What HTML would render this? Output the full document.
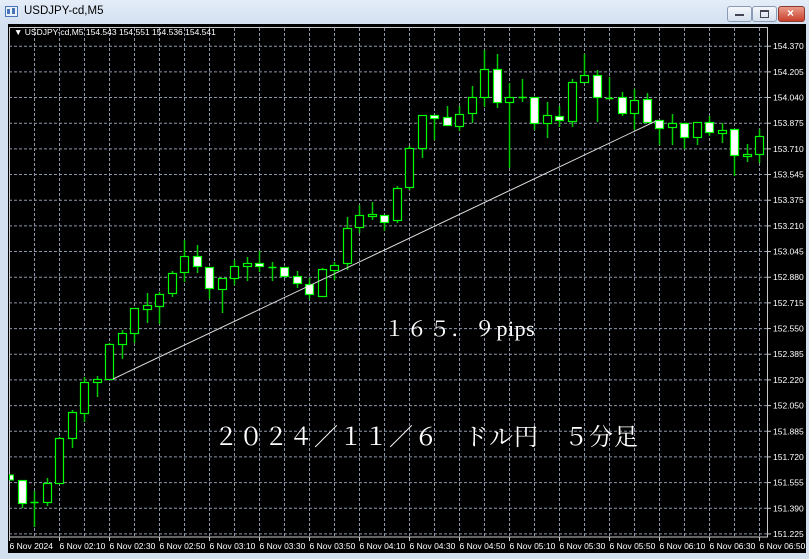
<!DOCTYPE html>
<html><head><meta charset="utf-8"><style>
html,body{margin:0;padding:0;width:809px;height:559px;overflow:hidden;background:#dce7f4;}
#w{position:absolute;left:0;top:0;width:809px;height:559px;background:linear-gradient(#e4edf8,#d3e0f0 24px,#d3e0f0);}
.title{position:absolute;left:24px;top:5px;font:11.5px "Liberation Sans",sans-serif;color:#000;}
.btn{position:absolute;top:6px;height:14px;border:1px solid #8a9bb5;border-radius:3px;background:linear-gradient(#f4f7fb,#d6e0ee);}
svg{position:absolute;left:0;top:0;}
.jp{font-family:"Liberation Serif","Noto Serif CJK JP",serif;fill:#fff;}
</style></head><body><div id="w">
<svg width="14" height="12" style="left:5px;top:6px"><rect x="0.5" y="0.5" width="12" height="10" fill="#e8f0fa" stroke="#4a76b8"/><rect x="2" y="3" width="3" height="5" fill="#4a76b8"/><rect x="7" y="2" width="3" height="6" fill="#4a76b8"/></svg>
<div class="title">USDJPY-cd,M5</div>
<div class="btn" style="left:727px;width:23px"><div style="position:absolute;left:7px;top:7px;width:9px;height:2px;background:#445"></div></div>
<div class="btn" style="left:752px;width:23px"><div style="position:absolute;left:7px;top:3px;width:7px;height:5px;border:1px solid #445;border-top-width:2px"></div></div>
<div class="btn" style="left:778px;width:25px;background:linear-gradient(#e99a8a,#c9412c);border-color:#8b3b2e"><div style="position:absolute;left:8px;top:-1px;color:#fff;font:bold 12px 'Liberation Sans',sans-serif">×</div></div>
<svg id="c" width="809" height="559" viewBox="0 0 809 559"></svg>
</div>
<script>
var s='';
s+='<rect x="8" y="24" width="798" height="529" fill="#000"/>';
for(var i=0;i<20;i++){var y=46.2+25.67*i;s+='<line x1="9" x2="768" y1="'+y+'" y2="'+y+'" stroke="#8d97a8" stroke-dasharray="3,2" stroke-width="1"/>';}
for(var k=0;k<30;k++){var x=34.5+25*k;s+='<line x1="'+x+'" x2="'+x+'" y1="28" y2="537" stroke="#8d97a8" stroke-dasharray="3,2" stroke-width="1"/>';}
s+='<rect x="9.5" y="27.5" width="758" height="509.5" fill="none" stroke="#c8c8c8"/>';
var labs=["154.370","154.205","154.040","153.875","153.710","153.545","153.375","153.210","153.045","152.880","152.715","152.550","152.385","152.220","152.050","151.885","151.720","151.555","151.390","151.225"];
for(i=0;i<20;i++){var y=46.2+25.67*i;s+='<line x1="768" x2="771" y1="'+y+'" y2="'+y+'" stroke="#ccc"/><text x="773" y="'+(y+3)+'" fill="#fff" font-family="Liberation Sans" font-size="8.5">'+labs[i]+'</text>';}
var tl=["2024","02:10","02:30","02:50","03:10","03:30","03:50","04:10","04:30","04:50","05:10","05:30","05:50","06:10","06:30","06:50"];
for(i=0;i<16;i++){var x=9.5+50*i;s+='<line x1="'+x+'" x2="'+x+'" y1="537" y2="541" stroke="#ccc"/><text x="'+(x)+'" y="549" fill="#fff" font-family="Liberation Sans" font-size="8.5">6 Nov '+tl[i]+'</text>';}
s+='<text x="14" y="35" fill="#fff" font-family="Liberation Sans" font-size="8.5">▼ USDJPY-cd,M5  154.543 154.551 154.536 154.541</text>';
var C=[[0,475,481,475,481,1],[1,480,508,480,503,1],[2,491,527,502,502,0],[3,478,506,483,502,0],[4,437,484,438,483,0],[5,410,448,412,438,0],[6,377,422,382,413,0],[7,376,397,379,382,0],[8,343,380,344,379,0],[9,330,359,333,344,0],[10,308,343,308,333,0],[11,293,323,305,309,0],[12,292,324,294,306,0],[13,271,297,273,293,0],[14,240,282,256,272,0],[15,245,273,256,266,1],[16,267,299,267,288,1],[17,278,313,278,289,0],[18,260,285,266,278,0],[19,257,281,263,266,0],[20,251,272,263,266,1],[21,262,281,267,267,0],[22,267,277,267,276,1],[23,271,288,276,283,1],[24,278,299,284,294,1],[25,268,297,269,296,0],[26,262,280,265,270,0],[27,217,270,228,263,0],[28,205,233,215,227,0],[29,202,220,214,216,0],[30,215,231,215,222,1],[31,186,223,188,220,0],[32,146,190,148,187,0],[33,115,158,115,148,0],[34,115,140,115,118,1],[35,106,125,117,125,1],[36,106,131,114,126,0],[37,86,123,97,113,0],[38,50,107,69,97,0],[39,54,108,69,102,1],[40,83,168,97,102,0],[41,79,102,97,97,0],[42,97,130,97,123,1],[43,102,138,115,123,0],[44,106,127,116,120,1],[45,79,127,82,121,0],[46,54,82,75,82,0],[47,70,122,75,97,1],[48,77,98,98,98,0],[49,92,116,97,113,1],[50,89,130,100,113,0],[51,93,122,99,122,1],[52,120,145,120,128,1],[53,114,145,123,127,0],[54,123,149,123,137,1],[55,122,145,122,137,0],[56,116,136,122,132,1],[57,123,143,130,133,0],[58,129,176,129,155,1],[59,144,162,154,156,0],[60,129,163,136,154,0]];
for(i=0;i<C.length;i++){var c=C[i],x=Math.round(9.2+12.5*c[0]);
 if(c[0]==0){s+='<rect x="9.5" y="'+c[3]+'" width="4" height="5" fill="#fff" stroke="#0f0"/>';continue;}
 s+='<line x1="'+(x+.5)+'" x2="'+(x+.5)+'" y1="'+c[1]+'" y2="'+c[2]+'" stroke="#0c0" stroke-width="1.5"/>';
 var h=c[4]-c[3];
 if(h<1){s+='<line x1="'+(x-3.5)+'" x2="'+(x+4.5)+'" y1="'+(c[3]+.5)+'" y2="'+(c[3]+.5)+'" stroke="#0f0" stroke-width="1.5"/>';}
 else s+='<rect x="'+(x-3.5)+'" y="'+(c[3]+.5)+'" width="8" height="'+h+'" fill="'+(c[5]?'#fff':'#000')+'" stroke="#0f0" stroke-width="1.2"/>';
}
s+='<line x1="113" y1="379" x2="656" y2="121" stroke="#ddd" stroke-width="1"/>';
s+='<text class="jp" x="384" y="336" font-size="21" letter-spacing="1.5">１６５．９<tspan font-size="22" letter-spacing="0.5">pips</tspan></text>';
s+='<text class="jp" x="214" y="445" font-size="24" letter-spacing="1">２０２４／１１／６　ドル円　５分足</text>';
document.getElementById('c').innerHTML=s;
</script>
</body></html>
